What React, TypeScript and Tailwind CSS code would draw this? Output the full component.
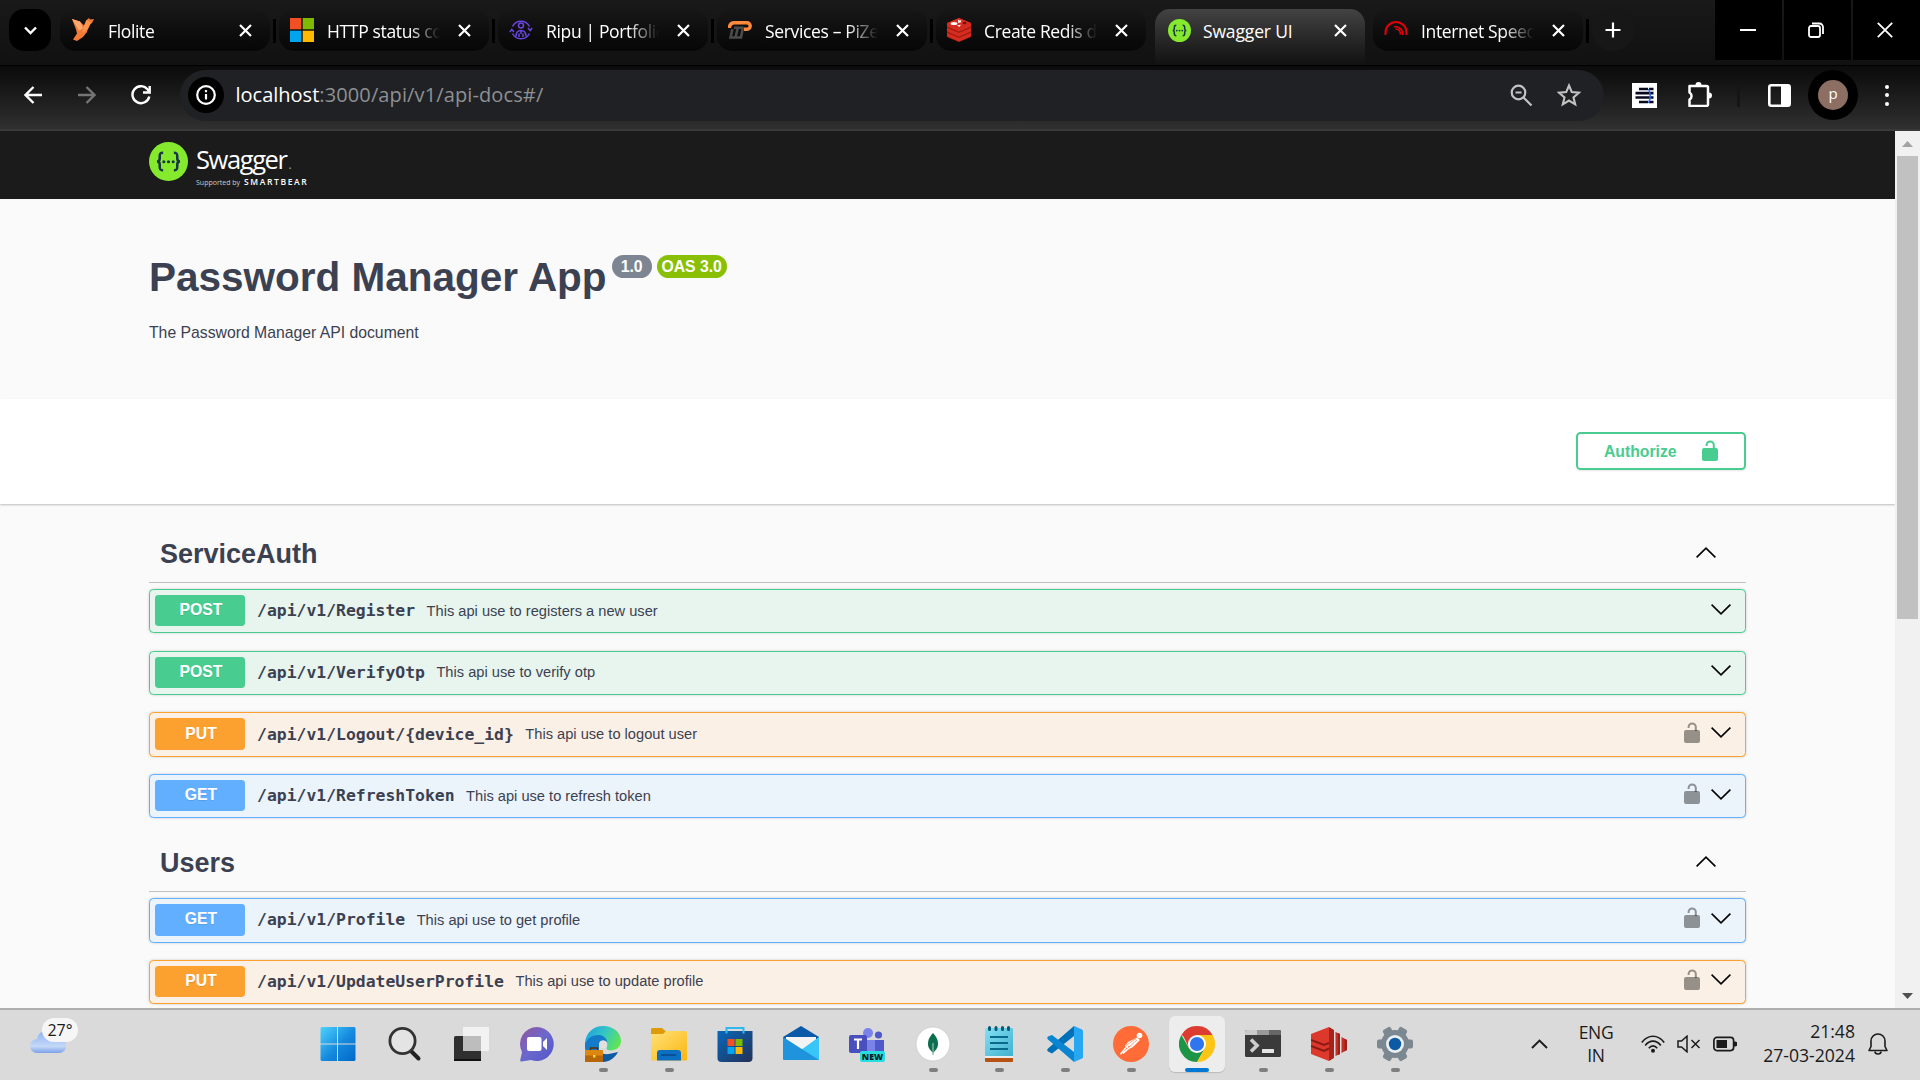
import React from "react";

type IconProps = { className?: string };

/* ---------- favicons ---------- */

const FloliteIcon = () => (
  <svg className="h-6 w-6" viewBox="0 0 24 24">
    <path d="M1 1l8 2.500 4 4 2-5 3-2.500 1 1.500 4-.5-2 4-3 2-2 7-4 5-6 4-4-1.500 4-6-1-4z" fill="#f47b35" />
    <path d="M1 1l8 2.500 3 7-4 2z" fill="#ffa873" />
    <path d="M13 8l3-6 4 3-3 6-6 4z" fill="#ff944d" />
  </svg>
);

const MicrosoftIcon = () => (
  <svg className="h-6 w-6" viewBox="0 0 24 24">
    <path d="M0 0h11.3v11.3H0z" fill="#f25022" />
    <path d="M12.7 0H24v11.3H12.7z" fill="#7fba00" />
    <path d="M0 12.7h11.3V24H0z" fill="#00a4ef" />
    <path d="M12.7 12.7H24V24H12.7z" fill="#ffb900" />
  </svg>
);

const RipuIcon = () => (
  <svg className="h-6 w-6" viewBox="0 0 24 24" fill="none" stroke="#6a45e0" strokeWidth="1.500">
    <path d="M3.500 8.500A9.500 9.500 0 0 1 20.500 8.500M20.500 15.500A9.500 9.500 0 0 1 3.500 15.500" />
    <path d="M.8 14l2-2.500 2.200 2.500M19 10l2.200 2.500 2-2.500" />
    <circle cx="12" cy="7.500" r="2.500" />
    <path d="M7 18.500c0-4 1.500-6 5-6s5 2 5 6M10 19v-3.500M14 19v-3.500M12 13v3" />
  </svg>
);

const PizeIcon = () => (
  <svg className="h-6 w-6" viewBox="0 0 24 24">
    <path d="M1.500 10c0-4 2-5.200 5-5.200h12.500a3.200 3.200 0 0 1 0 6.400H16" fill="none" stroke="#ff8a3c" strokeWidth="3.400" />
    <path d="M4.500 11L2.500 19.500h5L10 9M15 9l-2 10.500H8.500M6 9.800h9.500" fill="none" stroke="#4b4b4b" strokeWidth="2.600" />
  </svg>
);

const RedisIcon = () => (
  <svg className="h-6 w-6" viewBox="0 0 24 24">
    <path d="M0 5l12-5 12 5v14l-12 5L0 19z" fill="#a41e11" />
    <path d="M0 15l12 5 12-5v3.200L12 23.500 0 18.200z" fill="#d82c20" />
    <path d="M0 10l12 5 12-5v3.200L12 18.500 0 13.200z" fill="#d82c20" />
    <path d="M0 5l12 5 12-5v3.200L12 13.500 0 8.200z" fill="#d82c20" />
    <path d="M0 5l12-5 12 5-12 5z" fill="#d82c20" />
    <ellipse cx="7" cy="5.500" rx="3.400" ry="1.600" fill="#fff" />
    <path d="M11 1.500l1.500 1 2-.3-.8 1.300 1 .8-2.200.1-1.500.8.200-1.500zM10 7.500l4-.8-1.600 2.300z" fill="#fff" />
    <ellipse cx="17.500" cy="5" rx="2" ry="1.200" fill="#7a0c00" />
  </svg>
);

const SwaggerMark = ({ className }: IconProps) => (
  <svg className={className} viewBox="0 0 40 40">
    <circle cx="20" cy="20" r="20" fill="#85ea2d" />
    <g fill="none" stroke="#173647" strokeWidth="2.600">
      <path d="M14.500 11c-3 0-3.500 1-3.500 3.500v2.500c0 2-.8 3-2.800 3 2 0 2.800 1 2.800 3v2.500c0 2.500.5 3.500 3.500 3.500" />
      <path d="M25.500 11c3 0 3.500 1 3.500 3.500v2.500c0 2 .8 3 2.800 3-2 0-2.800 1-2.800 3v2.500c0 2.500-.5 3.500-3.500 3.500" />
    </g>
    <circle cx="15.200" cy="20.200" r="1.600" fill="#173647" />
    <circle cx="20" cy="20.200" r="1.600" fill="#173647" />
    <circle cx="24.800" cy="20.200" r="1.600" fill="#173647" />
  </svg>
);

const SwaggerFavicon = () => (
  <span className="flex h-6 w-6 items-center justify-center">
    <SwaggerMark className="h-[23px] w-[23px]" />
  </span>
);

const SpeedIcon = () => (
  <svg className="h-6 w-6" viewBox="0 0 24 24" fill="none" stroke="#e3000b" strokeWidth="2">
    <path d="M1.500 17V14.500A10.500 10.500 0 0 1 22.500 14.500V17" />
    <path d="M10 8.500c5 0 9 3 9 8.500M11.500 11c3 0 5 2.500 5 5.500" strokeWidth="1.700" />
  </svg>
);

/* ---------- browser chrome ---------- */

const CloseIcon = () => (
  <svg className="h-[13px] w-[13px] shrink-0" viewBox="0 0 13 13" stroke="#fff" strokeWidth="2.200">
    <path d="M1 1l11 11M12 1L1 12" />
  </svg>
);

type TabData = { title: string; icon: React.ReactNode; active?: boolean };

const tabs: TabData[] = [
  { title: "Flolite", icon: <FloliteIcon /> },
  { title: "HTTP status co", icon: <MicrosoftIcon /> },
  { title: "Ripu | Portfolic", icon: <RipuIcon /> },
  { title: "Services – PiZe", icon: <PizeIcon /> },
  { title: "Create Redis d", icon: <RedisIcon /> },
  { title: "Swagger UI", icon: <SwaggerFavicon />, active: true },
  { title: "Internet Speed", icon: <SpeedIcon /> },
];

const Tab = ({ title, icon, active }: TabData) => (
  <div
    className={
      active
        ? "flex h-[57px] w-[210px] items-start rounded-t-[15px] bg-gradient-to-b from-[#434343] to-[#111] pl-[12px] pr-[18px]"
        : "flex h-[42px] w-[210px] items-start rounded-[15px] bg-gradient-to-b from-[#171717] via-[#0e0e0e] to-[#070707] pl-[11px] pr-[18px]"
    }
  >
    <div className="mt-[9px] shrink-0">{icon}</div>
    <div
      className={
        active
          ? "ml-[12px] mt-[9px] h-[27px] w-[114px] overflow-hidden whitespace-nowrap text-[17.5px] leading-[27px] tracking-[-0.15px] text-white"
          : "ml-[13px] mt-[9px] h-[27px] w-[114px] overflow-hidden whitespace-nowrap text-[17.5px] leading-[27px] tracking-[-0.35px] text-white [mask-image:linear-gradient(to_right,black_82px,transparent_113px)]"
      }
    >
      {title}
    </div>
    <div className="ml-auto mt-[14.5px]">
      <CloseIcon />
    </div>
  </div>
);

const Separator = () => <div className="mt-[10px] h-6 w-[3px] bg-black" />;

const TabStrip = () => (
  <div className="flex h-[65px] items-start overflow-hidden bg-gradient-to-b from-[#191919] to-[#111] pt-[9px]">
    <div className="ml-[9px] mr-[9px] flex h-[42px] w-[42px] shrink-0 items-center justify-center rounded-[15px] bg-black">
      <svg className="h-[9px] w-[13px]" viewBox="0 0 13 9" fill="none" stroke="#fff" strokeWidth="2.400">
        <path d="M1 1.500l5.500 5.500L12 1.500" />
      </svg>
    </div>
    {tabs.map((t, i) => (
      <div key={t.title} className="flex w-[219px] shrink-0">
        <div className={i === 6 ? "-ml-px w-[213px]" : "w-[213px]"}>
          <Tab {...t} />
        </div>
        {i !== 4 && i !== 5 && <Separator />}
      </div>
    ))}
    <div className="-ml-px flex h-[42px] w-[42px] shrink-0 items-center justify-center rounded-full bg-[#171717]">
      <svg className="h-4 w-4" viewBox="0 0 16 16" stroke="#fff" strokeWidth="2.200">
        <path d="M8 .5v15M.5 8h15" />
      </svg>
    </div>
    <div className="-mt-[9px] ml-auto flex h-[60px] gap-[2px]">
      <div className="flex w-[67px] items-center justify-center bg-black pr-px">
        <div className="h-[2px] w-4 bg-white" />
      </div>
      <div className="flex w-[67px] items-center justify-center bg-black pr-[3px]">
        <svg className="h-4 w-4" viewBox="0 0 16 16" fill="none" stroke="#fff" strokeWidth="1.800">
          <rect x="1" y="4" width="11" height="11" rx="2" />
          <path d="M4 1.500h7.500a3.500 3.500 0 0 1 3.500 3.500v7" />
        </svg>
      </div>
      <div className="flex w-[67px] items-center justify-center bg-black pr-[3px]">
        <svg className="h-4 w-4" viewBox="0 0 16 16" stroke="#fff" strokeWidth="1.800">
          <path d="M.8.8l14.400 14.400M15.200.8L.8 15.200" />
        </svg>
      </div>
    </div>
  </div>
);

const Toolbar = () => (
  <div className="flex h-[66px] items-center border-b-2 border-t border-b-[#3a3a3a] border-t-black bg-gradient-to-b from-[#0b0b0b] to-[#303030] pb-[7px] pt-[2px]">
    <svg className="ml-[24px] h-[18px] w-[18px]" viewBox="0 0 18 18" fill="none" stroke="#fff" strokeWidth="2.400">
      <path d="M18 9H2M9.500 1L1.500 9l8 8" />
    </svg>
    <svg className="ml-[36px] h-[18px] w-[18px]" viewBox="0 0 18 18" fill="none" stroke="#757575" strokeWidth="2.400">
      <path d="M0 9h16M8.500 1l8 8-8 8" />
    </svg>
    <svg className="ml-[35px] h-5 w-5" viewBox="0 0 20 20" fill="none" stroke="#fff" strokeWidth="2.400">
      <path d="M18.300 11.500A8.500 8.500 0 1 1 16.500 4.200L18 6.500" />
      <path d="M18.700 1v6.500H12" />
    </svg>
    <div className="ml-[29px] flex h-[51px] w-[1424px] items-center rounded-full bg-[#202124] pl-[7.5px]">
      <div className="flex h-9 w-9 items-center justify-center rounded-full bg-black">
        <svg className="h-5 w-5" viewBox="0 0 20 20" fill="none" stroke="#fff" strokeWidth="2.200">
          <circle cx="10" cy="10" r="8.800" />
          <path d="M10 9v5.500M10 5v2.200" />
        </svg>
      </div>
      <div className="ml-[12px] whitespace-nowrap text-[20px] leading-7 tracking-[0.12px] text-[#8e9093]">
        <span className="tracking-normal text-white">localhost</span>:3000/api/v1/api-docs#/
      </div>
      <svg className="ml-auto h-[23px] w-[23px]" viewBox="0 0 23 23" fill="none" stroke="#c3c3c3" strokeWidth="2.200">
        <circle cx="8.500" cy="8.500" r="6.800" />
        <path d="M5.500 8.500h6M13.500 13.500l8 8" />
      </svg>
      <svg className="ml-[24px] mr-[23px] h-6 w-6" viewBox="0 0 24 24" fill="none" stroke="#c3c3c3" strokeWidth="2.100">
        <path d="M12 2.500l2.800 6.600 7.200.6-5.500 4.700 1.700 7L12 17.600l-6.200 3.800 1.700-7L2 9.700l7.200-.6z" />
      </svg>
    </div>
    <svg className="ml-[28px] h-[25px] w-[25px]" viewBox="0 0 25 25">
      <path d="M0 0h25v25H0z" fill="#fff" />
      <path d="M7 6h9M3.500 10.200h18M3.500 14.500h18M7 19h9M17 6h4.500M17 19h4.500" stroke="#08091f" strokeWidth="2.700" />
      <path d="M16.500 6c2.500 5 2.500 9 0 14" stroke="#2d6bff" strokeWidth="1.500" fill="none" />
    </svg>
    <svg className="mb-[3px] ml-[30px] h-[26px] w-[26px]" viewBox="0 0 26 26" fill="none" stroke="#fff" strokeWidth="2.500" strokeLinejoin="round">
      <path d="M2.500 5h17a1.500 1.500 0 0 1 1.500 1.500v17a1.500 1.500 0 0 1-1.500 1.500h-17v-6.500a4 4 0 0 0 0-7z" />
      <path d="M8.500 4a3 3 0 0 1 6 0zM22 11.500a3 3 0 0 1 0 6z" fill="#fff" stroke="none" />
    </svg>
    <div className="ml-[24px] h-6 w-[3px] bg-[#151515]" />
    <svg className="ml-[28px] h-[23px] w-[23px]" viewBox="0 0 23 23">
      <rect x="1.300" y="1.300" width="20.400" height="20.400" rx="2" fill="none" stroke="#fff" strokeWidth="2.600" />
      <path d="M13 1h8v21h-8z" fill="#fff" />
    </svg>
    <div className="ml-[17px] flex h-[50px] w-[50px] items-center justify-center rounded-full bg-black">
      <div className="flex h-[30px] w-[30px] items-center justify-center rounded-full bg-[#8d6e63] pb-[3px] text-[15px] leading-none text-white">
        p
      </div>
    </div>
    <div className="ml-[27px] flex flex-col gap-[4.500px]">
      <div className="h-[4px] w-[4px] rounded-full bg-white" />
      <div className="h-[4px] w-[4px] rounded-full bg-white" />
      <div className="h-[4px] w-[4px] rounded-full bg-white" />
    </div>
  </div>
);

/* ---------- swagger page ---------- */

const Lock = ({ className }: IconProps) => (
  <svg className={className} viewBox="0 0 16 21">
    <path d="M4.600 6V5a3.500 3.500 0 0 1 7.200 0V9" fill="none" stroke="currentColor" strokeWidth="2" />
    <rect y="8" width="16" height="13" rx="2" fill="currentColor" />
  </svg>
);

const Chevron = ({ className }: IconProps) => (
  <svg className={className} viewBox="0 0 20 11" fill="none" stroke="#000" strokeWidth="1.600">
    <path d="M.6.600l9.400 9.200L19.400.6" />
  </svg>
);

type Method = "POST" | "PUT" | "GET";
type Op = { method: Method; path: string; text: string; locked: boolean };

const rowStyle: Record<Method, string> = {
  POST: "border-[#49cc90] bg-[#e7f5ee]",
  PUT: "border-[#fca130] bg-[#fbf0e5]",
  GET: "border-[#61affe] bg-[#ebf3fb]",
};
const badgeStyle: Record<Method, string> = {
  POST: "bg-[#49cc90]",
  PUT: "bg-[#fca130]",
  GET: "bg-[#61affe]",
};

const serviceAuth: Op[] = [
  { method: "POST", path: "/api/v1/Register", text: "This api use to registers a new user", locked: false },
  { method: "POST", path: "/api/v1/VerifyOtp", text: "This api use to verify otp", locked: false },
  { method: "PUT", path: "/api/v1/Logout/{device_id}", text: "This api use to logout user", locked: true },
  { method: "GET", path: "/api/v1/RefreshToken", text: "This api use to refresh token", locked: true },
];

const users: Op[] = [
  { method: "GET", path: "/api/v1/Profile", text: "This api use to get profile", locked: true },
  { method: "PUT", path: "/api/v1/UpdateUserProfile", text: "This api use to update profile", locked: true },
];

const Operation = ({ method, path, text, locked }: Op) => (
  <div
    className={`mb-[17.2px] flex h-[44.5px] items-center rounded-[4.5px] border pl-[5px] pr-[14px] shadow-[0_0_3px_rgba(0,0,0,0.19)] ${rowStyle[method]}`}
  >
    <div
      className={`mb-px flex h-[31.5px] w-[90px] items-center justify-center rounded-[3.4px] pb-px pl-[2px] text-[15.75px] font-bold text-white [text-shadow:0_1px_0_rgba(0,0,0,0.1)] ${badgeStyle[method]}`}
    >
      {method}
    </div>
    <div className="ml-[12px] whitespace-nowrap pt-px font-['DejaVu_Sans_Mono',monospace] text-[16.42px] font-bold">{path}</div>
    <div className="ml-[11.5px] whitespace-nowrap pt-px text-[14.65px]">{text}</div>
    <div className="ml-auto flex items-center gap-[11px] text-black/40">
      {locked && <Lock className="mb-[5px] h-[21px] w-4" />}
      <Chevron className="mb-[4px] h-[11px] w-5" />
    </div>
  </div>
);

const Section = ({ title, ops }: { title: string; ops: Op[] }) => (
  <div>
    <div className="mb-[6px] flex h-[56.400px] items-center border-b border-[#bfc0c3] pb-px pl-[11px] pr-[30px]">
      <h3 className="text-[27px] font-bold leading-8">{title}</h3>
      <Chevron className="mb-[3px] ml-auto h-[11px] w-5 rotate-180" />
    </div>
    {ops.map((o) => (
      <Operation key={o.path} {...o} />
    ))}
  </div>
);

const SwaggerPage = () => (
  <div className="h-[877px] w-[1895px] overflow-hidden bg-[#fafafa] font-['Liberation_Sans',Arial,sans-serif] text-[#3b4151]">
    <div className="flex h-[68px] bg-[#1b1b1b] pl-[149px] pt-[11px]">
      <SwaggerMark className="h-[39px] w-[39px]" />
      <div className="ml-[8px] whitespace-nowrap font-['Open_Sans',sans-serif] text-white">
        <div className="h-[35px] text-[25.500px] leading-[35px] tracking-[-1.400px]">
          Swagger<span className="ml-[2px] text-[12px] text-[#aaa]">.</span>
        </div>
        <div className="flex items-baseline text-[7px] leading-[10px] text-[#ccc]">
          Supported by
          <span className="ml-[4px] text-[8.500px] font-semibold tracking-[1.600px] text-white">SMARTBEAR</span>
        </div>
      </div>
    </div>
    <div className="h-[200px] px-[149px] pt-[56px]">
      <div className="flex">
        <h1 className="-mt-px whitespace-nowrap text-[40.5px] font-bold leading-[47px]">Password Manager App</h1>
        <div className="ml-[5px] flex h-[23px] w-10 items-center justify-center rounded-full bg-[#7d8492] text-[15.75px] font-bold text-white">
          1.0
        </div>
        <div className="ml-[5px] flex h-[23px] w-[70px] items-center justify-center whitespace-nowrap rounded-full bg-[#89bf04] text-[15.75px] font-bold text-white">
          OAS 3.0
        </div>
      </div>
      <p className="mt-[23px] text-[15.75px] leading-[18px]">The Password Manager API document</p>
    </div>
    <div className="flex h-[105px] justify-end bg-white pr-[149px] pt-[33px] shadow-[0_1px_2px_rgba(0,0,0,0.25)]">
      <div className="flex h-[38px] w-[170px] items-center justify-between rounded-[4.5px] border-2 border-[#49cc90] pl-[26px] pr-[26px] text-[15.75px] font-bold text-[#49cc90] shadow-[0_1px_2px_rgba(0,0,0,0.1)]">
        <span className="pt-px">Authorize</span>
        <Lock className="mb-px h-[21px] w-4" />
      </div>
    </div>
    <div className="px-[149px] pt-[22.500px]">
      <Section title="ServiceAuth" ops={serviceAuth} />
      <Section title="Users" ops={users} />
    </div>
  </div>
);

const Scrollbar = () => (
  <div className="flex h-[877px] w-[25px] flex-col items-center bg-[#f1f1f1]">
    <div className="flex h-[25px] items-center justify-center">
      <svg className="h-[6px] w-[11px]" viewBox="0 0 11 6" fill="#a3a3a3">
        <path d="M5.500 0L11 6H0z" />
      </svg>
    </div>
    <div className="h-[463px] w-[21px] bg-[#c1c1c1]" />
    <svg className="mb-[9px] mt-auto h-[6px] w-[11px]" viewBox="0 0 11 6" fill="#505050">
      <path d="M0 0h11L5.500 6z" />
    </svg>
  </div>
);

/* ---------- taskbar ---------- */

const svgProps = { className: "h-9 w-9 shrink-0", viewBox: "0 0 36 36" };

const StartIcon = () => (
  <svg className="-ml-[3px] h-9 w-9 shrink-0" viewBox="0 0 36 36">
    <defs>
      <linearGradient id="start" gradientUnits="userSpaceOnUse" x1="0" y1="0" x2="36" y2="36">
        <stop offset="0" stopColor="#4fd5ff" />
        <stop offset=".55" stopColor="#1488dd" />
        <stop offset="1" stopColor="#0067c8" />
      </linearGradient>
    </defs>
    <path d="M1.500 1H17v16.500H.5V2zM18 1h16.500l1 1v15.500H18zM.5 18.500H17V35H1.500l-1-1zM18 18.500h17.500V34l-1 1H18z" fill="url(#start)" />
  </svg>
);

const SearchIcon = () => (
  <svg {...svgProps}>
    <path d="M24 25l7.500 7.500" stroke="#222" strokeWidth="4" strokeLinecap="round" />
    <circle cx="15.500" cy="15" r="12.600" fill="#e4e4e4" stroke="#333" strokeWidth="2.800" />
  </svg>
);

const TaskViewIcon = () => (
  <svg {...svgProps}>
    <rect x="1" y="10" width="27" height="25" rx="1.500" fill="#2f2f2f" />
    <path d="M1 33h27v2H1z" fill="#111" />
    <rect x="10" y="1" width="26" height="24" rx="1" fill="#f2f2f2" />
    <path d="M10 10h18v15H10z" fill="#bdbdbd" />
  </svg>
);

const ChatIcon = () => (
  <svg {...svgProps}>
    <defs>
      <linearGradient id="chat" x1="0" y1="0" x2="1" y2="1">
        <stop offset="0" stopColor="#94569f" />
        <stop offset=".5" stopColor="#6a68cd" />
        <stop offset="1" stopColor="#5356c8" />
      </linearGradient>
    </defs>
    <path d="M18 1a17 17 0 1 1-6 33l-9.500 1.500c-1 0-1.500-.8-1.200-1.800L3 26A17 17 0 0 1 18 1z" fill="url(#chat)" />
    <rect x="8" y="11" width="14.500" height="14" rx="2" fill="#fff" />
    <path d="M24 16l4-4v12l-4-4z" fill="#fff" />
  </svg>
);

const EdgeIcon = () => (
  <svg {...svgProps}>
    <defs>
      <linearGradient id="edge" x1="0" y1=".2" x2="1" y2=".6">
        <stop offset="0" stopColor="#1ca0e2" />
        <stop offset=".5" stopColor="#35c6c4" />
        <stop offset="1" stopColor="#62e552" />
      </linearGradient>
    </defs>
    <path d="M0 17C1 6 9 0 18 0c11 0 18 7 18 15 0 6-5 9.500-10 9.500-3 0-5-1-4.500-2.500 2-4 .5-9-5-9-8 0-14 3-16.500 11z" fill="url(#edge)" />
    <path d="M12 16c-2 8 4 13 12 12l9-2c-3 6-9 10-15 10-8 0-12-8-6-20z" fill="#0c59a4" />
    <path d="M0 18c3-7 9-9.500 14-9 5 .5 8.500 4 8 8-2-4-8-3-8 3v7H2C0 24-.5 21 0 18z" fill="#137bc9" />
    <circle cx="18" cy="18.500" r="4" fill="#e0e0e0" />
    <path d="M0 24h18v12H0z" fill="#b86706" />
    <path d="M0 24h18v5.500H0z" fill="#dc8711" />
    <path d="M5.500 24v-2h7v2" stroke="#5b3102" strokeWidth="1.500" fill="none" />
    <path d="M8 29h2.500v2.500H8z" fill="#ffd33c" />
  </svg>
);

const ExplorerIcon = () => (
  <svg {...svgProps}>
    <defs>
      <linearGradient id="folder" x1="0" y1="0" x2="1" y2="1">
        <stop offset="0" stopColor="#ffe17a" />
        <stop offset="1" stopColor="#fbb70f" />
      </linearGradient>
    </defs>
    <path d="M0 3.500A1.500 1.500 0 0 1 1.500 2H11l4 3.500V12H0z" fill="#dd9c05" />
    <path d="M0 8h12l3-3h19.500A1.500 1.500 0 0 1 36 6.500V33.500c0 .8-.6 1-1.500 1H1.500C.6 34.500 0 34 0 33z" fill="url(#folder)" />
    <path d="M6 34.500V27c0-2 1-3 3-3h18c2 0 3 1 3 3v7.500z" fill="#0d6fc2" />
    <path d="M10 29h15" stroke="#064c8b" strokeWidth="1.600" />
  </svg>
);

const StoreIcon = () => (
  <svg {...svgProps}>
    <defs>
      <linearGradient id="store" x1="0" y1="0" x2="1" y2="1">
        <stop offset="0" stopColor="#0968bb" />
        <stop offset="1" stopColor="#233057" />
      </linearGradient>
    </defs>
    <path d="M.5 5h35v27a4 4 0 0 1-4 4h-27a4 4 0 0 1-4-4z" fill="url(#store)" />
    <path d="M9.500 7.500V2h17v5.500" fill="none" stroke="#31b9ef" strokeWidth="2" />
    <path d="M10.500 13h7v7h-7z" fill="#f25022" />
    <path d="M18.500 13h7v7h-7z" fill="#7fba00" />
    <path d="M10.500 21h7v7h-7z" fill="#00a4ef" />
    <path d="M18.500 21h7v7h-7z" fill="#ffb900" />
  </svg>
);

const MailIcon = () => (
  <svg {...svgProps}>
    <path d="M0 11L18 0l18 11v9H0z" fill="#0b5aa8" />
    <path d="M3 11h30v10L18 25 3 21z" fill="#f4f4f4" />
    <path d="M36 11v23H14z" fill="#2cb5ee" />
    <path d="M36 11L18 24l12 8 6 2z" fill="#37c6f6" />
    <path d="M0 11l36 23H1a1 1 0 0 1-1-1z" fill="#1f93dc" />
  </svg>
);

const TeamsIcon = () => (
  <svg {...svgProps}>
    <circle cx="19" cy="7" r="5" fill="#7b83eb" />
    <circle cx="29.500" cy="9" r="3.600" fill="#5059c9" />
    <path d="M12 14h15v20H12z" fill="#7b83eb" />
    <path d="M26 14h9v16h-9z" fill="#5059c9" />
    <rect y="9" width="18" height="18" rx="2" fill="#4950bd" />
    <path d="M5 13.500h8M9 13.500v9.500" stroke="#fff" strokeWidth="2.200" />
    <rect x="11" y="25" width="25" height="11" rx="2" fill="#26dde0" />
    <text x="23.500" y="34" textAnchor="middle" fontFamily="Open Sans, sans-serif" fontWeight="800" fontSize="8.800" fill="#0c1b24">
      NEW
    </text>
  </svg>
);

const MongoIcon = () => (
  <svg {...svgProps}>
    <circle cx="18" cy="18" r="17" fill="#fff" stroke="#c4c4c4" strokeWidth=".7" />
    <path d="M18 7c3 3.500 5 6 5 11 0 4-2.500 6.500-5 9-2.500-2.500-5-5-5-9 0-5 2-7.500 5-11z" fill="#0b6e4f" />
    <path d="M18 17v12" stroke="#8fb9a6" strokeWidth="1.300" />
  </svg>
);

const NotepadIcon = () => (
  <svg {...svgProps}>
    <defs>
      <linearGradient id="note" x1="0" y1="0" x2="1" y2="1">
        <stop offset="0" stopColor="#83e0f3" />
        <stop offset="1" stopColor="#42b1cf" />
      </linearGradient>
    </defs>
    <path d="M4 30h28v5a1 1 0 0 1-1 1H5a1 1 0 0 1-1-1z" fill="#b65314" />
    <path d="M4 29h28v3H4z" fill="#ececec" />
    <path d="M5 2h26a1 1 0 0 1 1 1v27H4V3a1 1 0 0 1 1-1z" fill="url(#note)" />
    <path d="M9 11h18M9 17h18M9 23h18" stroke="#0b6a8c" strokeWidth="1.900" />
    <path d="M8.500 1.500v2M15 1.500v2M21.500 1.500v2M27.500 1.500v2" stroke="#075a78" strokeWidth="3" strokeLinecap="round" />
  </svg>
);

const VsCodeIcon = () => (
  <svg {...svgProps}>
    <path d="M27 0v10L5 27.500 1 25.500c-1-1-1-2 0-3z" fill="#0070b8" />
    <path d="M1 10.500c-1 1-1 2 0 3L27 36V26L5 9z" fill="#0a85d1" />
    <path d="M27 0l8 3.500a2 2 0 0 1 1 1.800v25.400a2 2 0 0 1-1 1.800L27 36z" fill="#27a6f2" />
  </svg>
);

const PostmanIcon = () => (
  <svg {...svgProps}>
    <circle cx="18" cy="18" r="18" fill="#ff6c37" />
    <circle cx="26.500" cy="9.500" r="2.800" fill="#fff" />
    <path d="M24 11.500l3 2.500-7 7-5-1z" fill="#fff" />
    <path d="M24 11.500l-9 4.500-3 4 3 2.500zM15 20l5 1-5 2.500z" fill="#fff" />
    <path d="M13.500 21L7.500 28.300M16 22l-6 5.500" stroke="#fff" strokeWidth="1.500" />
    <path d="M13 19.500l10-7M16 21l8-7" stroke="#ff6c37" strokeWidth=".6" />
  </svg>
);

const ChromeIcon = () => (
  <svg {...svgProps}>
    <path d="M18 18L2.410 9A18 18 0 0 1 33.590 9z" fill="#dd3c31" />
    <path d="M2.410 9A18 18 0 0 0 18 36l7.800-13.500L10.200 22.500z" fill="#1e9447" />
    <path d="M33.590 9A18 18 0 0 1 18 36l7.800-13.500L18 9z" fill="#fcc516" />
    <path d="M3.200 8L10.200 22 18 9z" fill="#dd3c31" />
    <circle cx="18" cy="18" r="9" fill="#fff" />
    <circle cx="18" cy="18" r="7.100" fill="#2f75ef" />
  </svg>
);

const TerminalIcon = () => (
  <svg {...svgProps}>
    <rect y="4" width="36" height="27" rx="1.500" fill="#3a3a3a" />
    <path d="M0 9V5.500A1.500 1.500 0 0 1 1.500 4H12v5z" fill="#c9c9c9" />
    <path d="M12 4h12v5H12z" fill="#999" />
    <path d="M24 4h10.500A1.500 1.500 0 0 1 36 5.500V9H24z" fill="#666" />
    <path d="M6 13.500l6 6-6 6" fill="none" stroke="#ccc" strokeWidth="3.600" />
    <rect x="17" y="23" width="12" height="4" rx=".5" fill="#e4e4e4" />
  </svg>
);

const RedisInsightIcon = () => (
  <svg {...svgProps}>
    <path d="M0 8L18 1v34L0 28z" fill="#dc382c" />
    <path d="M18 1l5 3v28l-5 3z" fill="#a6231b" />
    <path d="M0 14l13 5 5-2M0 20l13 5 5-2.500" fill="none" stroke="#8b1a13" strokeWidth="2" />
    <path d="M24.500 6l4.500 2v20l-4.500 2z" fill="#c52e24" />
    <path d="M30.500 11l5.500 3v10l-5.500 3z" fill="#c52e24" />
    <path d="M27 7v22l2-1V8zM33.500 12.700v12.600l2.500-1.300V14z" fill="#9d2119" />
  </svg>
);

const SettingsIcon = () => (
  <svg {...svgProps}>
    <g fill="#7b8791">
      <rect x="13.500" y="0" width="9" height="36" rx="2" transform="rotate(30 18 18)" />
      <rect x="13.500" y="0" width="9" height="36" rx="2" transform="rotate(90 18 18)" />
      <rect x="13.500" y="0" width="9" height="36" rx="2" transform="rotate(150 18 18)" />
      <circle cx="18" cy="18" r="14" />
    </g>
    <circle cx="18" cy="18" r="9" fill="#eceff1" />
    <circle cx="18" cy="18" r="6.200" fill="#0c5aa6" />
  </svg>
);

type TaskbarApp = { icon: React.ReactNode; state: "idle" | "open" | "active" };

const apps: TaskbarApp[] = [
  { icon: <StartIcon />, state: "idle" },
  { icon: <SearchIcon />, state: "idle" },
  { icon: <TaskViewIcon />, state: "idle" },
  { icon: <ChatIcon />, state: "idle" },
  { icon: <EdgeIcon />, state: "open" },
  { icon: <ExplorerIcon />, state: "open" },
  { icon: <StoreIcon />, state: "idle" },
  { icon: <MailIcon />, state: "idle" },
  { icon: <TeamsIcon />, state: "idle" },
  { icon: <MongoIcon />, state: "open" },
  { icon: <NotepadIcon />, state: "open" },
  { icon: <VsCodeIcon />, state: "open" },
  { icon: <PostmanIcon />, state: "open" },
  { icon: <ChromeIcon />, state: "active" },
  { icon: <TerminalIcon />, state: "open" },
  { icon: <RedisInsightIcon />, state: "open" },
  { icon: <SettingsIcon />, state: "open" },
];

const Weather = () => (
  <div className="relative ml-[30px] mt-[8px] h-[36px] w-[50px]">
    <svg className="absolute left-0 top-[12px] h-[23px] w-9" viewBox="0 0 36 23">
      <defs>
        <linearGradient id="cloud" x1="0" y1="0" x2="0" y2="1">
          <stop offset="0" stopColor="#8eb2f2" />
          <stop offset=".7" stopColor="#c4d8f8" />
          <stop offset="1" stopColor="#7ba0e8" />
        </linearGradient>
      </defs>
      <path d="M7 23a7 7 0 0 1 0-14C8 4 11 1 16 1c5 0 8 3 9 7h4a7.500 7.500 0 0 1 0 15z" fill="url(#cloud)" />
    </svg>
    <div className="absolute left-[12px] top-0 flex h-6 w-9 items-center justify-center rounded-full bg-[#f6f6f6] text-[16px] text-[#1b1b1b]">
      27°
    </div>
  </div>
);

const Taskbar = () => (
  <div className="flex h-[72px] border-t-2 border-[#afafaf] bg-[#dadada] font-['Open_Sans',sans-serif] text-[#1b1b1b]">
    <div className="w-[306px] shrink-0">
      <Weather />
    </div>
    <div className="flex shrink-0">
      {apps.map(({ icon, state }, i) => (
        <div key={i} className="flex w-[66px] flex-col items-center pt-[6px]">
          <div
            className={
              state === "active"
                ? "flex h-14 w-14 flex-col items-center rounded-md bg-[#ededed] pt-[10px] shadow-[0_1px_1px_rgba(0,0,0,0.15)]"
                : "flex h-14 w-14 flex-col items-center pt-[10px]"
            }
          >
            {icon}
            {state === "open" && <div className="mt-[6px] h-[5px] w-[9px] rounded-full bg-[#7f7f7f]" />}
            {state === "active" && <div className="mt-[6px] h-[5px] w-6 rounded-full bg-[#0078d4]" />}
          </div>
        </div>
      ))}
    </div>
    <div className="ml-[102px] flex w-[390px] items-center pb-[3px]">
      <svg className="ml-[0.5px] h-[10px] w-[17px] shrink-0" viewBox="0 0 17 10" fill="none" stroke="#1b1b1b" strokeWidth="1.900">
        <path d="M1 9l7.500-7.500L16 9" />
      </svg>
      <div className="ml-[26.5px] w-[44px] shrink-0 text-center text-[17.500px] leading-[23px] tracking-[-0.3px]">
        ENG
        <br />
        IN
      </div>
      <svg className="ml-[23px] h-[18px] w-6 shrink-0" viewBox="0 0 24 18" fill="none" stroke="#1b1b1b" strokeWidth="1.600">
        <path d="M.8 7.500C7-.8 17-.8 23.200 7.500M4.200 10.500c4.500-5.800 11.100-5.800 15.600 0M7.800 13.300c2.500-3.200 5.900-3.200 8.400 0" />
        <circle cx="12" cy="15.800" r="2" fill="#1b1b1b" stroke="none" />
      </svg>
      <svg className="ml-[12px] h-[18px] w-6 shrink-0" viewBox="0 0 24 18" fill="none" stroke="#1b1b1b" strokeWidth="1.500">
        <path d="M1 6h3.500L10 1.200v15.600L4.500 12H1z" />
        <path d="M14.500 5l8 8M22.500 5l-8 8" />
      </svg>
      <svg className="ml-[12px] h-[16px] w-6 shrink-0" viewBox="0 0 24 16">
        <rect x=".9" y="1.400" width="19.700" height="13.200" rx="3" fill="none" stroke="#1b1b1b" strokeWidth="1.700" />
        <path d="M3.500 4h10.500v8H3.500z" fill="#1b1b1b" />
        <path d="M21 5.500h1a2.500 2.500 0 0 1 0 5h-1z" fill="#1b1b1b" />
      </svg>
      <div className="-mt-[2px] ml-[16px] w-[102px] shrink-0 whitespace-nowrap text-right text-[17.600px] leading-6">
        21:48
        <br />
        27-03-2024
      </div>
      <svg className="ml-[13px] h-[22px] w-5 shrink-0" viewBox="0 0 20 22" fill="none" stroke="#1b1b1b" strokeWidth="1.600">
        <path d="M1 17.500l2-4V8a7 7 0 0 1 14 0v5.500l2 4z" strokeLinejoin="round" />
        <path d="M7 18.500a3 2.500 0 0 0 6 0" />
      </svg>
    </div>
  </div>
);

export default function App() {
  return (
    <div className="flex h-[1080px] w-[1920px] flex-col overflow-hidden font-['Open_Sans',sans-serif]">
      <TabStrip />
      <Toolbar />
      <div className="flex h-[877px]">
        <SwaggerPage />
        <Scrollbar />
      </div>
      <Taskbar />
    </div>
  );
}
